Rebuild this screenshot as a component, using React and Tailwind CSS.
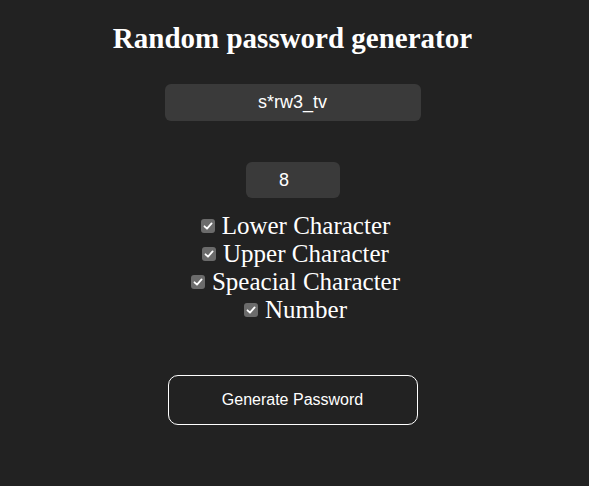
import React from "react";

const options = ["Lower Character", "Upper Character", "Speacial Character", "Number"];

function Check() {
  return (
    <span className="inline-flex items-center justify-center w-[14px] h-[14px] rounded-[3px] bg-[#6b6b6b] ml-[6px] mr-[7px]">
      <svg width="10" height="10" viewBox="0 0 10 10" fill="none">
        <path d="M1.5 5.3 L4 7.7 L8.6 2.4" stroke="white" strokeWidth="1.8" strokeLinecap="round" strokeLinejoin="round" />
      </svg>
    </span>
  );
}

export default function App() {
  return (
    <div className="min-h-[486px] w-full bg-[#222222] text-white flex flex-col items-center pr-[4px]">
      <h1 className="mt-[21px] text-[29px] leading-[34px] font-bold font-['Liberation_Serif',serif]">
        Random password generator
      </h1>
      <div className="mt-[29px] w-[256px] h-[37px] rounded-[6px] bg-[#3a3a3a] flex items-center justify-center font-['Liberation_Sans',sans-serif] text-[18px]">
        s*rw3_tv
      </div>
      <div className="mt-[41px] w-[94px] h-[36px] rounded-[6px] bg-[#3a3a3a] flex items-center justify-center pr-[17px] font-['Liberation_Sans',sans-serif] text-[18px]">
        8
      </div>
      <div className="mt-[14px] flex flex-col items-center font-['Liberation_Serif',serif] text-[25px] leading-[28px]">
        {options.map((o) => (
          <label key={o} className="flex items-center">
            <Check />
            {o}
          </label>
        ))}
      </div>
      <button className="mt-[51px] w-[250px] h-[50px] rounded-[10px] border border-white text-white text-[16px] font-['Liberation_Sans',sans-serif]">
        Generate Password
      </button>
    </div>
  );
}
